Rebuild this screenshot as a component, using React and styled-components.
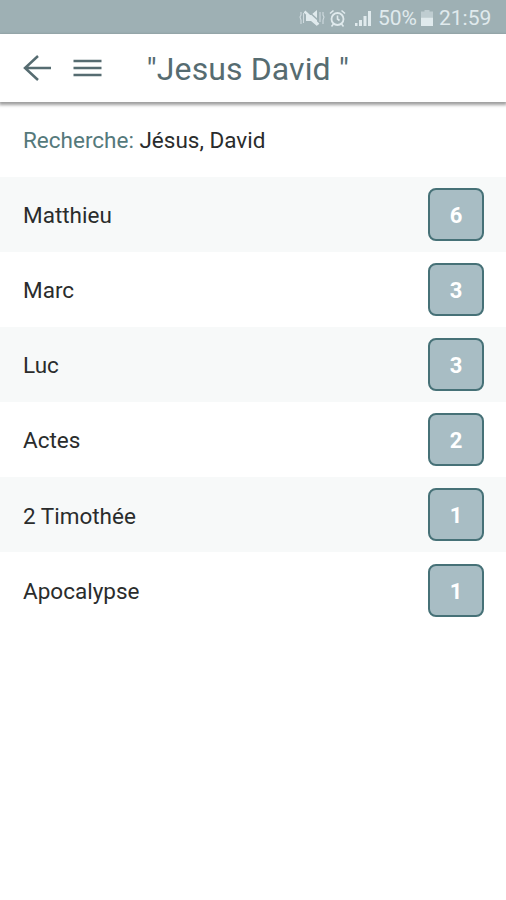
import styled, { createGlobalStyle } from "styled-components";

const color = {
  statusBar: "#9eb0b4",
  statusText: "#e0eaed",
  heading: "#566c71",
  label: "#55797b",
  text: "#2a2c2c",
  stripe: "#f7f9f9",
  badge: "#a8bdc4",
  badgeBorder: "#467177",
};

const GlobalStyle = createGlobalStyle`
  * {
    box-sizing: border-box;
  }
  body {
    margin: 0;
    background: #fff;
    font-family: Roboto, sans-serif;
  }
`;

const Screen = styled.div`
  display: flex;
  flex-direction: column;
  width: 506px;
  height: 900px;
  overflow: hidden;
  background: #fff;
`;

const StatusBar = styled.div`
  display: flex;
  align-items: center;
  justify-content: flex-end;
  flex: none;
  height: 34px;
  padding: 2px 14px 0 0;
  background: ${color.statusBar};
  color: ${color.statusText};
  font-size: 21px;
  svg {
    flex: none;
  }
  .alarm {
    margin-left: 3px;
  }
  .signal {
    margin: 0 6px 0 8px;
  }
  .battery {
    margin: 0 6px 0 5px;
  }
`;

const StatusText = styled.span`
  width: ${(props) => props.$width}px;
  white-space: nowrap;
`;

const Header = styled.header`
  display: flex;
  align-items: center;
  flex: none;
  height: 68px;
  padding-left: 23px;
  background: #fff;
  box-shadow: 0 2px 3px 1px rgba(0, 0, 0, 0.38);
  color: ${color.heading};
  .menu {
    margin-left: 22px;
  }
`;

const Title = styled.h1`
  margin: 2px 0 0 44.5px;
  font-size: 32px;
  font-weight: 400;
  letter-spacing: 0.1px;
  white-space: pre;
`;

const SearchLine = styled.div`
  flex: none;
  height: 74.5px;
  padding: 25px 23px 0;
  font-size: 22.5px;
  line-height: 26px;
  color: ${color.text};
  span {
    color: ${color.label};
  }
`;

const BookList = styled.ul`
  margin: 0;
  padding: 0;
  list-style: none;
`;

const BookRow = styled.li`
  display: flex;
  align-items: center;
  justify-content: space-between;
  height: 75.2px;
  padding: 0 22px 0 23px;
  font-size: 22.5px;
  color: ${color.text};
  &:nth-child(odd) {
    background: ${color.stripe};
  }
`;

const BookName = styled.span`
  padding-top: 1.5px;
`;

const Badge = styled.span`
  display: flex;
  align-items: center;
  justify-content: center;
  width: 56px;
  height: 53px;
  padding-top: 2px;
  border: 2px solid ${color.badgeBorder};
  border-radius: 8px;
  background: ${color.badge};
  color: #fff;
  font-size: 22px;
  font-weight: 700;
`;

const books = [
  { name: "Matthieu", count: 6 },
  { name: "Marc", count: 3 },
  { name: "Luc", count: 3 },
  { name: "Actes", count: 2 },
  { name: "2 Timothée", count: 1 },
  { name: "Apocalypse", count: 1 },
];

const MuteIcon = () => (
  <svg width="27" height="20" viewBox="0 0 27 20" fill="none" stroke="currentColor">
    <path d="M7 7h5l6-5v16l-6-5H7z" fill="currentColor" stroke="none" />
    <path d="M8 2l12 11" stroke={color.statusBar} strokeWidth="1.5" />
    <path d="M5.5 3.500l14 13" strokeWidth="2.400" />
    <path d="M2 4v3l-1 2 1 3v4M4.500 5v10M21 4v10M24 4v3l1 2-1 3v4" strokeWidth="1.100" opacity=".75" />
  </svg>
);

const AlarmIcon = () => (
  <svg className="alarm" width="17" height="19" viewBox="0 0 17 19" fill="none" stroke="currentColor">
    <circle cx="8.5" cy="10" r="6" strokeWidth="1.8" />
    <path d="M8.5 6.5V10l2 1.5M1 4.5L4.5 1.5M16 4.5l-3.500-3M4.500 15l-2 2.500M12.500 15l2 2.500" strokeWidth="1.600" />
  </svg>
);

const SignalIcon = () => (
  <svg className="signal" width="18" height="18" viewBox="0 0 18 18" fill="currentColor">
    <path d="M1 14h2.500v3H1zM5 11h3v6H5zM9.500 7h3v10h-3zM14 2h3v15h-3z" />
  </svg>
);

const BatteryIcon = () => (
  <svg className="battery" width="12" height="18" viewBox="0 0 12 18" fill="currentColor">
    <path d="M3.500 1h5v1.500H12v6H0v-6h3.500z" opacity=".5" />
    <path d="M0 8.500h12V17H0z" />
  </svg>
);

const BackIcon = () => (
  <svg width="28" height="26" viewBox="0 0 28 26" fill="none" stroke="currentColor" strokeWidth="2.500">
    <path d="M28 13H2M15 1L2 13l13 12" />
  </svg>
);

const MenuIcon = () => (
  <svg className="menu" width="29" height="18" viewBox="0 0 29 18" stroke="currentColor" strokeWidth="2.500">
    <path d="M0.500 2h28M0.500 9h28M0.500 16h28" />
  </svg>
);

function App() {
  return (
    <>
      <GlobalStyle />
      <Screen>
        <StatusBar>
          <MuteIcon />
          <AlarmIcon />
          <SignalIcon />
          <StatusText $width={38}>50%</StatusText>
          <BatteryIcon />
          <StatusText $width={53}>21:59</StatusText>
        </StatusBar>
        <Header>
          <BackIcon />
          <MenuIcon />
          <Title>{'"Jesus David "'}</Title>
        </Header>
        <SearchLine>
          <span>Recherche:</span> Jésus, David
        </SearchLine>
        <BookList>
          {books.map((book) => (
            <BookRow key={book.name}>
              <BookName>{book.name}</BookName>
              <Badge>{book.count}</Badge>
            </BookRow>
          ))}
        </BookList>
      </Screen>
    </>
  );
}

export default App;
